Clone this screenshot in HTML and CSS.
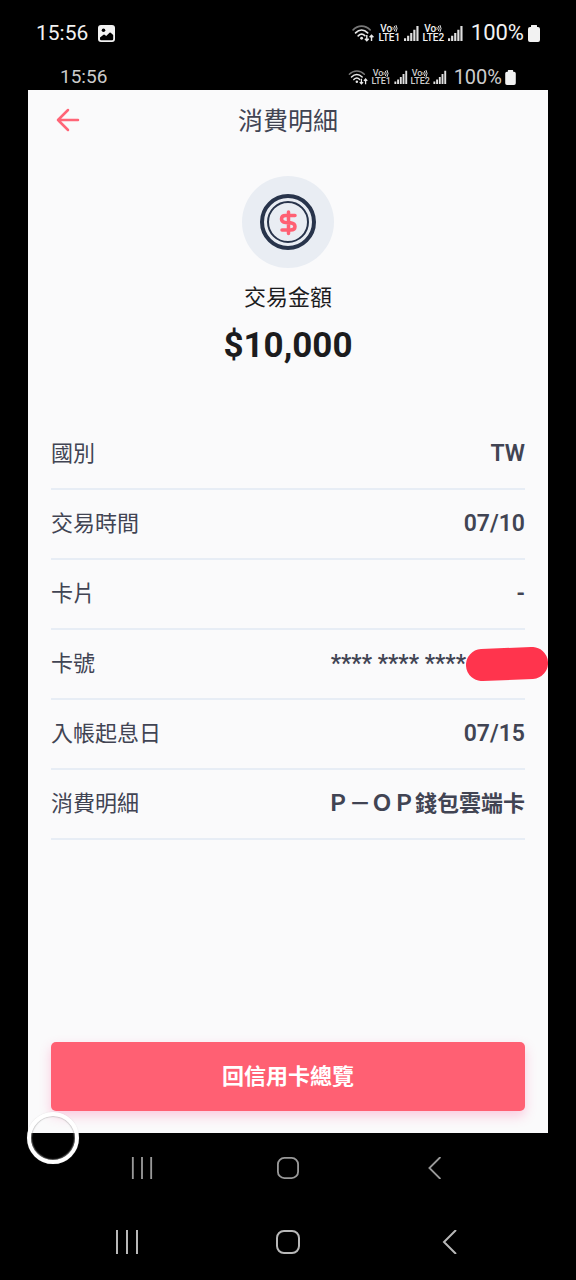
FILE: index.html
```html
<!DOCTYPE html>
<html lang="zh-Hant">
<head>
<meta charset="utf-8">
<meta name="viewport" content="width=device-width, initial-scale=1">
<title>消費明細</title>
<link rel="stylesheet" href="styles.css">
</head>
<body>
<svg class="sprite" aria-hidden="true">
  <symbol id="wifi" viewBox="0 0 24 18">
    <g fill="none" stroke-linecap="round">
      <path d="M1 5.200C6-.2 14-.2 19 5.200" stroke="#777" stroke-width="1.700"/>
      <path d="M3.600 8.300C7.500 4.300 12.500 4.300 16.400 8.300" stroke="#e8e8e8" stroke-width="1.800"/>
      <path d="M6.400 11.500C8.600 9.300 11.400 9.300 13.400 11.300" stroke="#e8e8e8" stroke-width="1.800"/>
    </g>
    <circle cx="10" cy="14" r="1.500" fill="#e8e8e8"/>
    <path d="M15.500 10.500V16.500M13.500 14.500L15.500 16.700L17.500 14.500M20.500 17V11M18.500 13L20.500 10.800L22.500 13" fill="none" stroke="#e8e8e8" stroke-width="1.500"/>
  </symbol>
  <symbol id="signal" viewBox="0 0 16 17">
    <path d="M0 14h2.300v3H0zM3.300 11.500h2.300V17h-2.300zM6.600 8.500h2.300V17h-2.300zM9.900 5h2.300v12h-2.300zM13.200 1h2.300v16h-2.300z" fill="#e0e0e0"/>
  </symbol>
  <symbol id="waves" viewBox="0 0 7 8">
    <path d="M1 2.500Q2 4 1 5.500M2.800 1Q4.600 4 2.800 7M4.600 0Q7.200 4 4.600 8" fill="none" stroke="#eee" stroke-width="1.100"/>
  </symbol>
  <symbol id="battery" viewBox="0 0 12 17">
    <path d="M3.500 0h5Q9 0 9 .500V2h1Q12 2 12 4V15Q12 17 10 17H2Q0 17 0 15V4Q0 2 2 2H3V.500Q3 0 3.500 0z" fill="#f2f2f2"/>
  </symbol>
  <symbol id="recents" viewBox="0 0 24 24">
    <path d="M2 0v24M12 0v24M22 0v24" fill="none" stroke="currentColor" stroke-width="2"/>
  </symbol>
  <symbol id="home" viewBox="0 0 24 24">
    <rect x="1" y="1" width="22" height="22" rx="7" fill="none" stroke="currentColor" stroke-width="2"/>
  </symbol>
  <symbol id="back" viewBox="0 0 24 24">
    <path d="M19 0L7 12L19 24" fill="none" stroke="currentColor" stroke-width="2"/>
  </symbol>
</svg>

<div class="device">
  <header class="status">
    <span class="time">15:56</span>
    <svg class="photo" viewBox="0 0 17 17" aria-hidden="true">
      <rect width="17" height="17" rx="3" fill="#f2f2f2"/>
      <circle cx="5.500" cy="5.300" r="1.800" fill="#000"/>
      <path d="M2 12.500L5.500 9.700Q6.200 9.200 6.900 9.900L8.200 11L11.500 7.800Q12.300 7.200 13 7.900L15.200 10V14Q15.200 15.200 14 15.200H3.200Q2 15.200 2 14z" fill="#000"/>
    </svg>
    <div class="indicators">
      <svg class="wifi"><use href="#wifi"/></svg>
      <span class="volte"><span class="vo">Vo<svg class="waves"><use href="#waves"/></svg></span><span>LTE1</span></span>
      <svg class="signal"><use href="#signal"/></svg>
      <span class="volte"><span class="vo">Vo<svg class="waves"><use href="#waves"/></svg></span><span>LTE2</span></span>
      <svg class="signal"><use href="#signal"/></svg>
      <span class="percent">100%</span>
      <svg class="battery"><use href="#battery"/></svg>
    </div>
  </header>

  <div class="capture">
    <div class="status status-small">
      <span class="time">15:56</span>
      <div class="indicators">
        <svg class="wifi"><use href="#wifi"/></svg>
        <span class="volte"><span class="vo">Vo<svg class="waves"><use href="#waves"/></svg></span><span>LTE1</span></span>
        <svg class="signal"><use href="#signal"/></svg>
        <span class="volte"><span class="vo">Vo<svg class="waves"><use href="#waves"/></svg></span><span>LTE2</span></span>
        <svg class="signal"><use href="#signal"/></svg>
        <span class="percent">100%</span>
        <svg class="battery"><use href="#battery"/></svg>
      </div>
    </div>

    <main class="app">
      <div class="topbar">
        <button class="return" type="button" aria-label="返回">
          <svg class="arrow" viewBox="0 0 24 24" aria-hidden="true"><path d="M22 12H2M12 2L2 12L12 22" fill="none" stroke="#ff6577" stroke-width="2.500" stroke-linecap="round" stroke-linejoin="round"/></svg>
        </button>
        <h1 class="title">消費明細</h1>
      </div>

      <section class="summary">
        <svg class="coin" viewBox="0 0 92 92" aria-hidden="true">
          <circle cx="46" cy="46" r="46" fill="#e9edf3"/>
          <circle cx="46" cy="46" r="26" fill="none" stroke="#28344b" stroke-width="4"/>
          <circle cx="46" cy="46" r="20" fill="none" stroke="#28344b" stroke-width="2"/>
          <path d="M46.500 36V57.500M53 39.500H43.500Q39.500 39.500 39.500 43Q39.500 46 43.500 46.500L48.500 46.800Q53 47.500 53 50.500Q53 54 48.500 54H40" fill="none" stroke="#ff6073" stroke-width="3.500" stroke-linecap="round" stroke-linejoin="round"/>
        </svg>
        <p class="caption">交易金額</p>
        <p class="amount">$10,000</p>
      </section>

      <dl class="details">
        <div class="row"><dt>國別</dt><dd>TW</dd></div>
        <div class="row"><dt>交易時間</dt><dd>07/10</dd></div>
        <div class="row"><dt>卡片</dt><dd>-</dd></div>
        <div class="row"><dt>卡號</dt><dd class="card">**** **** ****<svg class="mask" viewBox="0 0 82 34" aria-hidden="true"><path d="M15 2L65 0A16 16 0 0 1 67 32L17 34A16 16 0 0 1 15 2z" fill="#ff344d"/></svg></dd></div>
        <div class="row"><dt>入帳起息日</dt><dd>07/15</dd></div>
        <div class="row"><dt>消費明細</dt><dd class="wide">Ｐ－ＯＰ錢包雲端卡</dd></div>
      </dl>

      <button class="primary" type="button">回信用卡總覽</button>
      <span class="touch" aria-hidden="true"></span>
    </main>

    <nav class="keys keys-small">
      <button type="button" aria-label="最近"><svg><use href="#recents"/></svg></button>
      <button type="button" aria-label="首頁"><svg><use href="#home"/></svg></button>
      <button type="button" aria-label="返回"><svg><use href="#back"/></svg></button>
    </nav>
  </div>

  <nav class="keys">
    <button type="button" aria-label="最近"><svg><use href="#recents"/></svg></button>
    <button type="button" aria-label="首頁"><svg><use href="#home"/></svg></button>
    <button type="button" aria-label="返回"><svg><use href="#back"/></svg></button>
  </nav>
</div>
</body>
</html>
```

FILE: styles.css
```css
* {
  box-sizing: border-box;
}

body {
  margin: 0;
  background: #000;
  font-family: Roboto, "Noto Sans CJK TC", sans-serif;
  color: #414453;
}

button {
  padding: 0;
  border: 0;
  background: none;
  font: inherit;
  cursor: pointer;
}

svg {
  display: block;
  flex: none;
}

h1, p, dl, dd {
  margin: 0;
}

.sprite {
  position: absolute;
  width: 0;
  height: 0;
}

.device {
  display: flex;
  flex-direction: column;
  min-height: 100vh;
}

/* Status bars */

.status {
  display: flex;
  align-items: center;
  height: 66px;
  padding: 0 36px;
  color: #f2f2f2;
  font-size: 21px;
  line-height: 24px;
}

.photo {
  width: 17px;
  height: 17px;
  margin-left: 10px;
}

.indicators {
  display: flex;
  align-items: center;
  gap: 4px;
  margin-left: auto;
}

.wifi {
  width: 23px;
  height: 17px;
}

.volte {
  display: flex;
  flex-direction: column;
  align-items: center;
  width: 21px;
  font-size: 10px;
  font-weight: 500;
  line-height: 9px;
}

.vo {
  display: flex;
  align-items: center;
}

.waves {
  width: 6px;
  height: 7px;
}

.signal {
  width: 15px;
  height: 16px;
}

.percent {
  margin-left: 4px;
  font-size: 22px;
}

.battery {
  width: 12px;
  height: 17px;
}

.status-small {
  height: 24px;
  padding: 0 32px 2px;
  color: #ccc;
  font-size: 19px;
  line-height: 20px;
}

.status-small .indicators {
  gap: 3px;
}

.status-small .wifi {
  width: 21px;
  height: 15px;
}

.status-small .volte {
  width: 19px;
  font-size: 9px;
  line-height: 8px;
}

.status-small .signal {
  width: 14px;
  height: 14px;
}

.status-small .percent {
  font-size: 20px;
}

.status-small .battery {
  width: 11px;
  height: 15px;
}

/* Captured app screen */

.capture {
  display: flex;
  flex: 1;
  flex-direction: column;
  margin: 0 28px;
}

.app {
  position: relative;
  display: flex;
  flex: 1;
  flex-direction: column;
  padding: 0 23px 22px;
  background: #fafafb;
}

.topbar {
  display: grid;
  grid-template-columns: 34px 1fr 34px;
  align-items: center;
  height: 60px;
}

.return {
  display: flex;
  justify-content: center;
}

.arrow {
  width: 24px;
  height: 24px;
}

.title {
  padding-top: 4px;
  font-size: 25px;
  font-weight: 400;
  line-height: 36px;
  text-align: center;
}

.summary {
  display: flex;
  flex-direction: column;
  align-items: center;
  padding-top: 26px;
  color: #1c1c1e;
}

.coin {
  width: 92px;
  height: 92px;
}

.caption {
  margin-top: 14px;
  font-size: 22px;
  line-height: 32px;
}

.amount {
  margin-top: 11px;
  font-size: 35px;
  font-weight: 700;
  line-height: 42px;
}

.details {
  margin-top: 53px;
}

.row {
  display: flex;
  align-items: center;
  justify-content: space-between;
  height: 70px;
  border-bottom: 2px solid #e7edf5;
  font-size: 22px;
  line-height: 32px;
}

.row dd {
  font-size: 23px;
  font-weight: 600;
}

.row .card {
  display: flex;
  align-items: center;
}

.row .wide {
  font-size: 22px;
  font-weight: 700;
}

.mask {
  width: 82px;
  height: 34px;
  margin-right: -23px;
}

.primary {
  height: 69px;
  margin-top: auto;
  padding-bottom: 5px;
  border-radius: 5px;
  background: #ff6073;
  box-shadow: 0 5px 12px #ff60a050;
  color: #fff;
  font-size: 22px;
  font-weight: 700;
}

.touch {
  position: absolute;
  bottom: -31px;
  left: -1px;
  width: 52px;
  height: 52px;
  border: 4px solid #fff;
  border-radius: 50%;
  box-shadow: 0 0 1px #aaa8, inset 0 0 1px 1px #aaa8;
}

/* Navigation keys */

.keys {
  display: grid;
  grid-template-columns: repeat(3, 1fr);
  height: 77px;
  padding: 0 46px;
  color: #b8b8b8;
}

.keys button {
  display: flex;
  align-items: center;
  justify-content: center;
  color: inherit;
}

.keys svg {
  width: 24px;
  height: 24px;
}

.keys-small {
  height: 70px;
  padding: 0 41px;
  color: #999;
}

.keys-small svg {
  width: 22px;
  height: 22px;
}
```
